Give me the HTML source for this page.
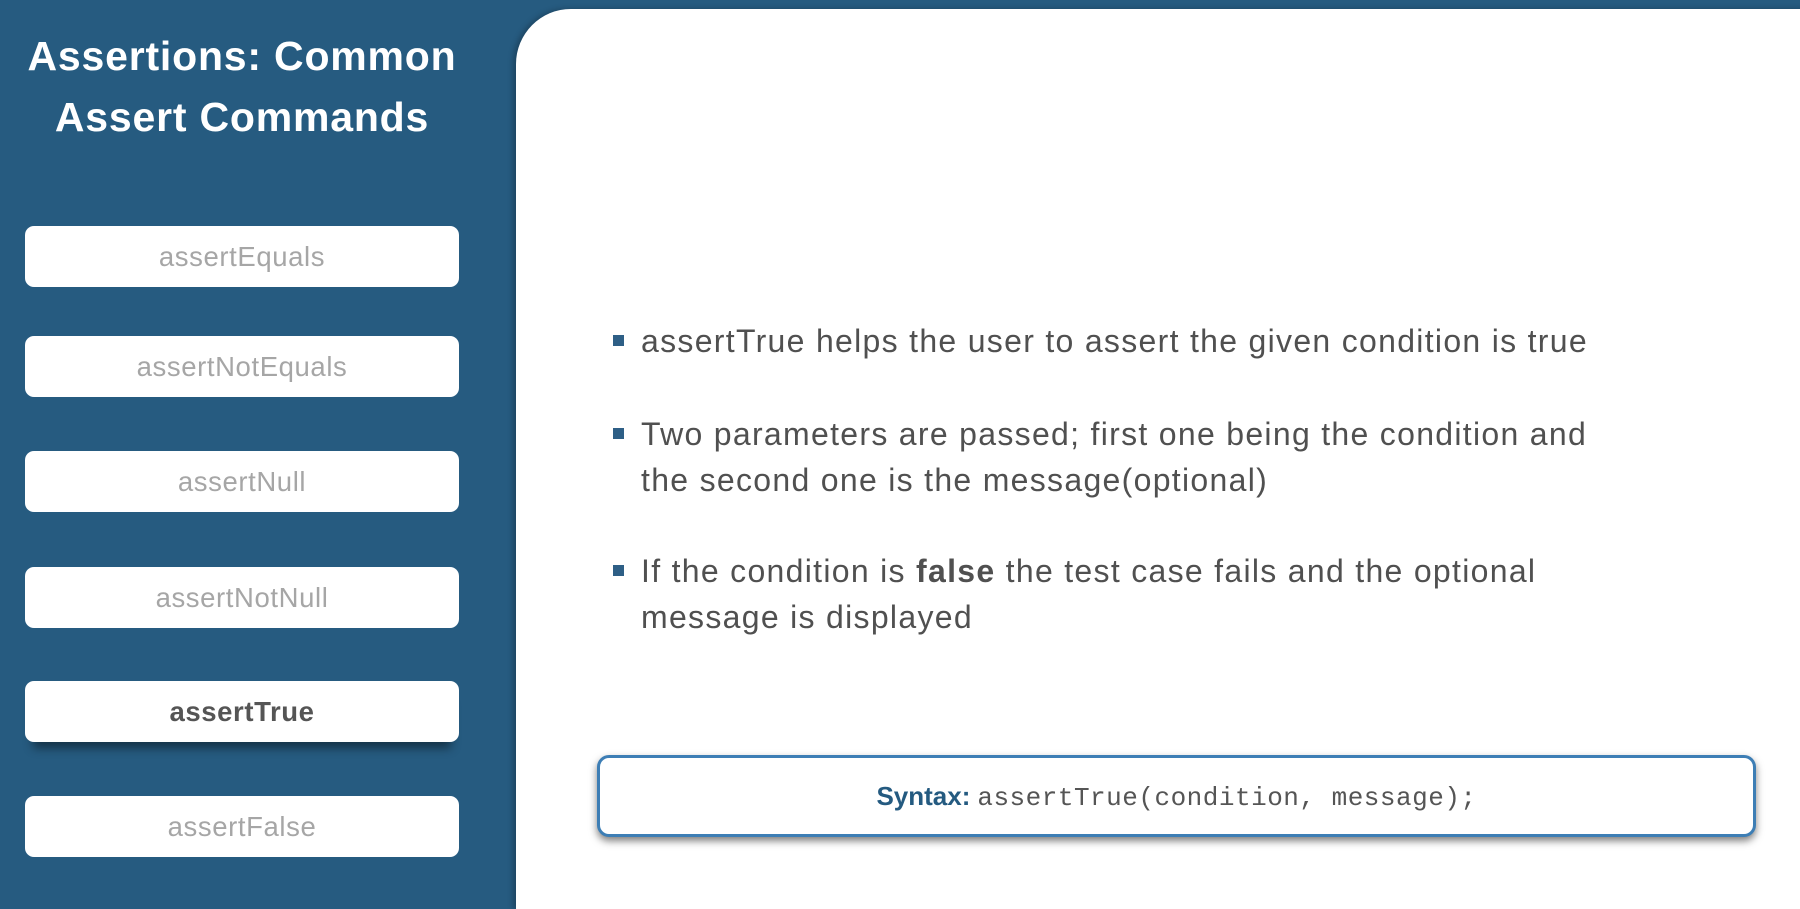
<!DOCTYPE html>
<html><head><style>
html,body{margin:0;padding:0}
body{width:1800px;height:892px;background:#265b80;position:relative;overflow:hidden;font-family:"Liberation Sans",sans-serif}
.title{position:absolute;left:0;width:484px;top:26px;text-align:center;color:#fff;font-weight:bold;font-size:41px;letter-spacing:0.8px;line-height:61px}
.btn{position:absolute;left:25px;width:434px;height:61px;background:#fff;border-radius:9px;text-align:center;line-height:61px;font-size:27.5px;letter-spacing:0.6px;color:#a6a6a6}
.btn.act{color:#555;font-weight:bold;box-shadow:0 14px 10px -8px rgba(0,0,0,.45)}
.panel{position:absolute;left:516px;top:9px;width:1300px;height:900px;background:#fff;border-top-left-radius:55px;box-shadow:-3px 0 6px rgba(0,0,0,.25)}
.b{position:absolute;left:641px;font-size:32px;letter-spacing:1.3px;line-height:46px;color:#505050;white-space:nowrap}
.b:before{content:"";position:absolute;left:-28px;top:17px;width:11px;height:11px;background:#2e5f86}
.syn{position:absolute;left:597px;top:755px;width:1153px;height:76px;border:3px solid #3d7eb5;border-radius:12px;background:#fff;box-shadow:0 4px 8px rgba(0,0,0,.5);text-align:center;line-height:76px;font-size:25px;color:#555}
.syn b{color:#245a80;font-size:26px}
.syn span{font-family:"Liberation Mono",monospace;font-size:26px;letter-spacing:0.5px}
</style></head><body>
<div class="title">Assertions: Common<br>Assert Commands</div>
<div class="btn" style="top:226px">assertEquals</div>
<div class="btn" style="top:336px">assertNotEquals</div>
<div class="btn" style="top:451px">assertNull</div>
<div class="btn" style="top:567px">assertNotNull</div>
<div class="btn act" style="top:681px">assertTrue</div>
<div class="btn" style="top:796px">assertFalse</div>
<div class="panel"></div>
<div class="b" style="top:318px">assertTrue helps the user to assert the given condition is true</div>
<div class="b" style="top:411px">Two parameters are passed; first one being the condition and<br>the second one is the message(optional)</div>
<div class="b" style="top:548px">If the condition is <b>false</b> the test case fails and the optional<br>message is displayed</div>
<div class="syn"><b>Syntax:</b> <span>assertTrue(condition, message);</span></div>
</body></html>
